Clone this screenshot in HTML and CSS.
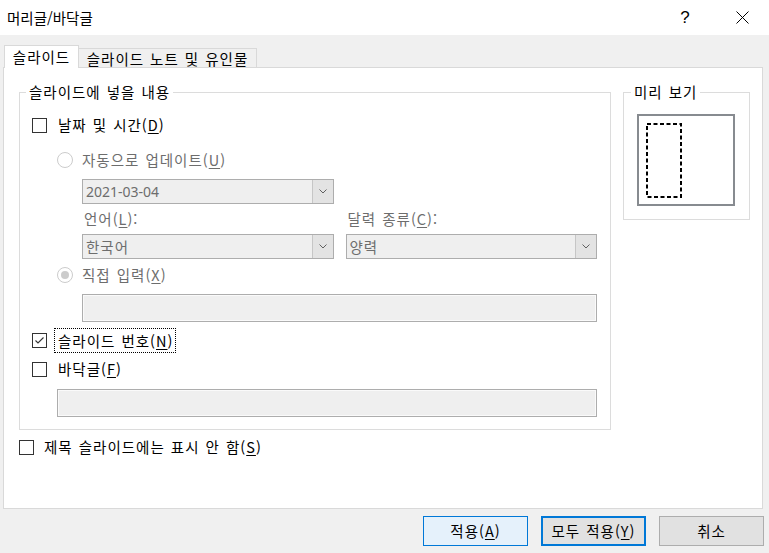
FILE: index.html
```html
<!DOCTYPE html>
<html lang="ko">
<head>
<meta charset="utf-8">
<title>머리글/바닥글</title>
<link rel="stylesheet" href="styles.css">
</head>
<body>
<header class="titlebar">
  <span class="title">머리글/바닥글</span>
  <span class="tb-btn help">?</span>
  <span class="tb-btn close">
    <svg width="13" height="13" viewBox="0 0 13 13"><path d="M0.5 0.5 L12.5 12.5 M12.5 0.5 L0.5 12.5" stroke="#000" stroke-width="1" fill="none"/></svg>
  </span>
</header>
<main class="dialog">
  <div class="tabs">
    <div class="tab active">슬라이드</div>
    <div class="tab inactive">슬라이드 노트 및 유인물</div>
  </div>
  <section class="panel">
    <div class="groups">
      <fieldset class="group group-content">
        <legend>슬라이드에 넣을 내용</legend>
        <div class="row mt11"><span class="cb"></span><span class="lbl">날짜 및 시간(<u>D</u>)</span></div>
        <div class="row indent1 mt11 disabled"><span class="rb"></span><span class="lbl">자동으로 업데이트(<u>U</u>)</span></div>
        <div class="grid indent2 mt7">
          <div class="combo"><span class="combo-text latin">2021-03-04</span><span class="combo-btn"><svg width="8" height="5" viewBox="0 0 8 5"><path d="M0.5 0.5 L4 4 L7.5 0.5" stroke="#606060" fill="none"/></svg></span></div>
          <div class="empty"></div>
          <div class="caption">언어(<u>L</u>):</div>
          <div class="caption">달력 종류(<u>C</u>):</div>
          <div class="combo"><span class="combo-text">한국어</span><span class="combo-btn"><svg width="8" height="5" viewBox="0 0 8 5"><path d="M0.5 0.5 L4 4 L7.5 0.5" stroke="#606060" fill="none"/></svg></span></div>
          <div class="combo"><span class="combo-text">양력</span><span class="combo-btn"><svg width="8" height="5" viewBox="0 0 8 5"><path d="M0.5 0.5 L4 4 L7.5 0.5" stroke="#606060" fill="none"/></svg></span></div>
        </div>
        <div class="row indent1 mt4 disabled"><span class="rb on"></span><span class="lbl">직접 입력(<u>X</u>)</span></div>
        <div class="textbox indent2 mt7"></div>
        <div class="row focus-row mt6"><span class="cb checked"><svg width="13" height="13" viewBox="0 0 13 13"><path d="M2.5 6.5 L5 9 L10.5 3.5" stroke="#333" stroke-width="1.1" fill="none"/></svg></span><span class="lbl focus">슬라이드 번호(<u>N</u>)</span></div>
        <div class="row mt4"><span class="cb"></span><span class="lbl">바닥글(<u>F</u>)</span></div>
        <div class="textbox indent1 mt8"></div>
      </fieldset>
      <fieldset class="group group-preview">
        <legend>미리 보기</legend>
        <div class="preview">
          <svg width="94" height="88" viewBox="0 0 94 88"><rect x="8" y="8" width="34" height="73" fill="none" stroke="#000" stroke-width="2" stroke-dasharray="4 2.5"/></svg>
        </div>
      </fieldset>
    </div>
    <div class="row title-row"><span class="cb"></span><span class="lbl">제목 슬라이드에는 표시 안 함(<u>S</u>)</span></div>
  </section>
  <div class="actions">
    <button class="btn apply" type="button">적용(<u>A</u>)</button>
    <button class="btn default" type="button">모두 적용(<u>Y</u>)</button>
    <button class="btn" type="button">취소</button>
  </div>
</main>
</body>
</html>
```

FILE: styles.css
```css
* { box-sizing: border-box; }
html, body { margin: 0; padding: 0; }
body {
  width: 769px;
  height: 553px;
  overflow: hidden;
  background: #f0f0f0;
  font-family: "Noto Sans CJK KR", "Noto Sans", sans-serif;
  font-size: 14.5px;
  line-height: 20px;
  color: #000;
  letter-spacing: 1px;
  word-spacing: 1px;
}
u { text-decoration-thickness: 1px; text-underline-offset: 2px; }

/* title bar */
.titlebar {
  height: 35px;
  background: #fff;
  display: flex;
  align-items: center;
  letter-spacing: 0;
}
.title { flex: 1; margin-left: 7px; }
.tb-btn {
  width: 46px;
  height: 35px;
  display: flex;
  align-items: center;
  justify-content: center;
}
.help {
  font-family: "Liberation Sans", sans-serif;
  font-size: 17px;
  margin-right: 11px;
}
.close { margin-right: 4px; }

/* dialog */
.dialog { padding: 10px 6px 0 3px; }

.tabs {
  display: flex;
  height: 23px;
  margin-bottom: -1px;
  padding-left: 1px;
  position: relative;
  z-index: 1;
}
.tab {
  border: 1px solid #d9d9d9;
  border-bottom: none;
  display: flex;
  align-items: center;
  justify-content: center;
}
.tab.active {
  width: 75px;
  height: 23px;
  background: #fff;
  position: relative;
  z-index: 2;
}
.tab.inactive {
  width: 179px;
  height: 19px;
  margin-top: 3px;
  margin-left: -1px;
  background: #f0f0f0;
  padding-top: 1px;
}

.panel {
  width: 760px;
  height: 442px;
  background: #fff;
  border: 1px solid #d9d9d9;
  padding: 14px 12px 0 15px;
}
.groups {
  display: flex;
  gap: 12px;
  align-items: flex-start;
}
.group {
  margin: 0;
  border: 1px solid #dcdcdc;
  min-width: 0;
}
.group legend {
  padding: 0 3px;
  margin-left: -6px;
  line-height: 20px;
}
.group-content {
  width: 592px;
  padding: 0 13px 12px 12px;
}
.group-preview {
  width: 127px;
  padding: 0 13px 13px 13px;
}
.preview {
  margin-top: 12px;
  width: 98px;
  height: 92px;
  border: 2px solid #878b90;
  background: #fff;
}
.preview svg { display: block; }

/* rows */
.row {
  display: flex;
  align-items: center;
  height: 24px;
}
.indent1 { margin-left: 25px; }
.indent2 { margin-left: 50px; }
.mt4 { margin-top: 4px; }
.mt6 { margin-top: 6px; }
.mt7 { margin-top: 7px; }
.mt8 { margin-top: 8px; }
.mt11 { margin-top: 11px; }

.disabled, .caption, .combo-text { color: #6d6d6d; }

.cb {
  flex: none;
  width: 15px;
  height: 15px;
  border: 1px solid #333;
  background: #fff;
  margin-right: 11px;
  display: flex;
  align-items: center;
  justify-content: center;
}
.cb svg { display: block; }
.rb {
  flex: none;
  width: 16px;
  height: 16px;
  border: 1px solid #cccccc;
  border-radius: 50%;
  background: #fff;
  margin-right: 9px;
  display: flex;
  align-items: center;
  justify-content: center;
}
.rb.on::after {
  content: "";
  width: 8px;
  height: 8px;
  border-radius: 50%;
  background: #cccccc;
}
.focus-row { height: 25px; }
.focus-row .cb { margin-right: 7px; }
.lbl.focus {
  height: 25px;
  border: 1px dotted #000;
  padding: 0 2px 0 3px;
  display: flex;
  align-items: center;
}

.grid {
  display: grid;
  grid-template-columns: 1fr 1fr;
  column-gap: 12px;
  row-gap: 5px;
}
.caption { padding-left: 2px; height: 20px; }
.combo {
  height: 25px;
  border: 1px solid #adadad;
  background: #efefef;
  display: flex;
  align-items: stretch;
}
.combo-text {
  flex: 1;
  padding-left: 3px;
  display: flex;
  align-items: center;
}
.latin { font-family: "Noto Sans", sans-serif; font-size: 14px; letter-spacing: 0; }
.combo-btn {
  width: 21px;
  border-left: 1px solid #c6c6c6;
  background: #e3e3e3;
  display: flex;
  align-items: center;
  justify-content: center;
}
.combo-btn svg { display: block; }

.textbox {
  height: 28px;
  border: 1px solid #adadad;
  background: #efefef;
  box-shadow: inset 0 0 0 1px #fafafa;
}

.title-row { margin-top: 5px; }
.title-row .cb { margin-right: 10px; }

/* buttons */
.actions {
  display: flex;
  justify-content: flex-end;
  gap: 13px;
  margin-top: 7px;
  margin-right: -1px;
}
.btn {
  width: 105px;
  height: 30px;
  border: 1px solid #adadad;
  background: #e1e1e1;
  font: inherit;
  letter-spacing: 1px;
  word-spacing: 1px;
  color: #000;
  padding: 0;
}
.btn.apply { border-color: #0078d7; background: #e5f1fb; }
.btn.default { border: 2px solid #0078d7; }
```
